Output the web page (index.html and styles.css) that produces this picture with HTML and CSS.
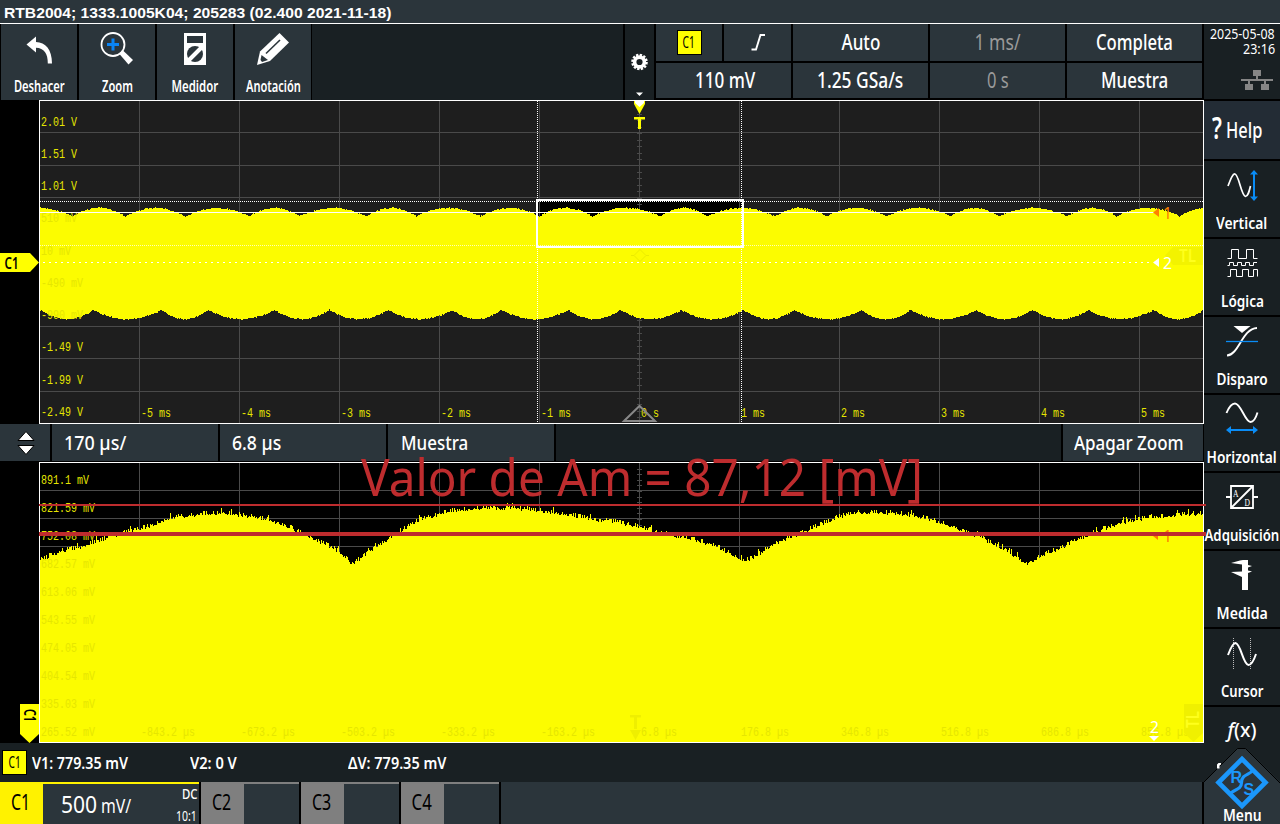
FILE: index.html
```html
<!DOCTYPE html>
<html lang="es">
<head>
<meta charset="utf-8">
<title>RTB2004</title>
<link rel="stylesheet" href="styles.css">
</head>
<body>
<div class="screen">
  <header class="titlebar"><span class="fit left" data-w="387">RTB2004; 1333.1005K04; 205283 (02.400 2021-11-18)</span></header>

  <div class="main">
    <div class="work">
      <div class="toolbar">
        <div class="tools">
          <div class="tool">
            <svg width="40" height="36" viewBox="-1 0 40 36"><path d="M6.500 15.500 16 7.500V13C25.500 13.300 32 20.500 32 34.500H27.800C28 24.500 24 19 16 18.800V23.500Z" fill="#fff"/></svg>
            <span class="fit" data-w="51">Deshacer</span>
          </div>
          <div class="tool">
            <svg width="40" height="36" viewBox="-1 0 40 36"><circle cx="15" cy="15.500" r="11.500" fill="none" stroke="#fff" stroke-width="1.800"/><path d="M15 9.500v12M9 15.500h12" stroke="#0a84f5" stroke-width="3"/><path d="M21 24.500l4-3L35 31l-4.500 4.500Z" fill="#fff"/></svg>
            <span class="fit" data-w="31">Zoom</span>
          </div>
          <div class="tool">
            <svg width="40" height="36" viewBox="0 0 40 36"><path d="M9 4h22v32H9z" fill="#fff"/><path d="M12 7h16v7H12z" fill="#2b353b"/><circle cx="20" cy="25" r="8" fill="#2b353b"/><path d="M13 32 27 18" stroke="#fff" stroke-width="4"/></svg>
            <span class="fit" data-w="47">Medidor</span>
          </div>
          <div class="tool">
            <svg width="40" height="36" viewBox="0 0 40 36"><path d="M4 36 7 22.500 26.500 4 36 13.500 17 32Z" fill="#fff"/><path d="M13 24.500 27 11" stroke="#2b353b" stroke-width="1.600"/><path d="M8.500 26 15 31 9 33 7.500 31Z" fill="#2b353b"/></svg>
            <span class="fit" data-w="55">Anotación</span>
          </div>
        </div>
        <div class="spacer"></div>
        <div class="gear">
          <svg width="29" height="76" viewBox="0 0 29 76"><circle cx="14.500" cy="38" r="7" fill="none" stroke="#fff" stroke-width="2.600" stroke-dasharray="2.300 1.365"/><circle cx="14.500" cy="38" r="4.900" fill="none" stroke="#fff" stroke-width="3.600"/><path d="M11 68.500h7L14.500 72Z" fill="#fff"/></svg>
        </div>
        <div class="info">
          <div class="cell"><b class="chip big"><span class="fit" data-w="12">C1</span></b></div>
          <div class="cell"><svg width="16" height="18" viewBox="0 0 16 18"><path d="M1.500 16.500H6L10.500 2H15" fill="none" stroke="#fff" stroke-width="1.900"/></svg></div>
          <div class="cell"><span class="fit" data-w="39">Auto</span></div>
          <div class="cell dim"><span class="fit" data-w="46">1 ms/</span></div>
          <div class="cell"><span class="fit" data-w="77">Completa</span></div>
          <div class="cell wide"><span class="fit" data-w="60">110 mV</span></div>
          <div class="cell"><span class="fit" data-w="86">1.25 GSa/s</span></div>
          <div class="cell dim"><span class="fit" data-w="22">0 s</span></div>
          <div class="cell"><span class="fit" data-w="67">Muestra</span></div>
        </div>
      </div>

      <svg class="chart" id="overview" width="1204" height="324" viewBox="0 100 1204 324"></svg>

      <div class="zoombar">
        <div class="zcell arrows"><svg width="18" height="26" viewBox="0 0 18 26"><path d="M1 10.500 9 1.500 17 10.500Z" fill="#fff" stroke="#000"/><path d="M1 15.500 9 24.500 17 15.500Z" fill="#fff" stroke="#000"/></svg></div>
        <div class="zcell z1"><span class="fit left" data-w="62">170 µs/</span></div>
        <div class="zcell z2"><span class="fit left" data-w="49">6.8 µs</span></div>
        <div class="zcell z2 z3"><span class="fit left" data-w="67">Muestra</span></div>
        <div class="zgap"></div>
        <div class="zcell zoff"><span class="fit left" data-w="110">Apagar Zoom</span></div>
      </div>

      <svg class="chart" id="detail" width="1204" height="281" viewBox="0 462 1204 281"></svg>

      <div class="measure">
        <b class="chip"><span class="fit" data-w="12">C1</span></b>
        <div class="m0"><span class="fit left" data-w="96">V1: 779.35 mV</span></div>
        <div class="m0"><span class="fit left" data-w="47">V2: 0 V</span></div>
        <div class="m0"><span class="fit left" data-w="98">ΔV: 779.35 mV</span></div>
      </div>

      <div class="channels">
        <div class="chan on">
          <div class="tag"><span class="fit" data-w="19">C1</span></div>
          <div class="body">
            <div class="scale"><span class="num"><span class="fit left" data-w="36">500</span></span><span class="unit"><span class="fit left" data-w="30">mV/</span></span></div>
            <div class="probe"><span class="fit right" data-w="16">DC</span><span class="fit right thin" data-w="21">10:1</span></div>
          </div>
        </div>
        <div class="chan"><div class="tag"><span class="fit" data-w="19">C2</span></div><div class="body"></div></div>
        <div class="chan"><div class="tag"><span class="fit" data-w="19">C3</span></div><div class="body"></div></div>
        <div class="chan"><div class="tag"><span class="fit" data-w="20">C4</span></div><div class="body"></div></div>
        <div class="fill"></div>
      </div>
    </div>

    <aside class="side">
      <div class="clock">
        <span class="fit right" data-w="65">2025-05-08</span>
        <span class="fit right" data-w="32">23:16</span>
        <svg width="34" height="22" viewBox="0 0 34 22"><path d="M13 0h8v6h-3v3h15v2h-7v3h3v6h-8v-6h3v-3H10v3h3v6H5v-6h3v-3H1V9h15V6h-3z" fill="#858585"/></svg>
      </div>
      <div class="help"><span class="q"><span class="fit left" data-w="10">?</span></span><span class="fit left" data-w="36">Help</span></div>
      <div class="item"><svg width="76" height="44" viewBox="0 0 76 44"><path d="M24 25C27 17 29 12.500 31 13C35 14 37 34 41.500 35.500C44 35.500 45 31 46.500 25" fill="none" stroke="#fff" stroke-width="1.700"/><path d="M50 12v26" stroke="#0a8cf5" stroke-width="2"/><path d="M46 13.500 50 9l4 4.500ZM46 35.500l4 4.500 4-4.500Z" fill="#0a8cf5"/></svg><span class="fit" data-w="51">Vertical</span></div>
      <div class="item"><svg width="76" height="44" viewBox="0 0 76 44"><path d="M23.500 19.500h4v-9h7v9h8v-9h7v9h4M23.500 26.500h2v-3h4v3h4v-3h4v3h4v-3h4v3h4v-3h3.500M23.500 37.500h3v-7h6v7h6v-7h6v7h5v-7h4v7" fill="none" stroke="#fff"/></svg><span class="fit" data-w="43">Lógica</span></div>
      <div class="item"><svg width="76" height="44" viewBox="0 0 76 44"><path d="M29.500 9h17L38 16Z" fill="#fff"/><path d="M23 38.500C35 38 38 11.500 53 11" fill="none" stroke="#fff" stroke-width="1.900"/><path d="M22 24.500h32" stroke="#0a8cf5" stroke-width="1.300"/></svg><span class="fit" data-w="51">Disparo</span></div>
      <div class="item"><svg width="76" height="44" viewBox="0 0 76 44"><path d="M22.500 18C25 12 28 8.500 31 8.500C37 8.500 41 27 46.500 27C49.500 27 52 22.500 53.500 17.500" fill="none" stroke="#fff" stroke-width="1.900"/><path d="M26 35h24" stroke="#0a8cf5" stroke-width="2"/><path d="M27 31 22 35l5 4ZM49 31l5 4-5 4Z" fill="#0a8cf5"/></svg><span class="fit" data-w="70">Horizontal</span></div>
      <div class="item"><svg width="76" height="44" viewBox="0 0 76 44"><path d="M27 13h22v22H27zM22 24h5M49 24h5M28 34 48 14" fill="none" stroke="#fff" stroke-width="1.800"/><text class="serif" x="29" y="24" textLength="5.500" lengthAdjust="spacingAndGlyphs">A</text><text class="serif" x="40.500" y="33" textLength="5.500" lengthAdjust="spacingAndGlyphs">D</text></svg><span class="fit" data-w="75">Adquisición</span></div>
      <div class="item"><svg width="76" height="44" viewBox="1 0 76 44"><path d="M28 12 37 9.500 40 9h5v5l4 1-4 1.500v3l4 1-4 1.500V39h-6V26L28 21l11-.5V13.500Z" fill="#fff"/></svg><span class="fit" data-w="51">Medida</span></div>
      <div class="item"><svg width="76" height="44" viewBox="0 -1 76 44"><path d="M29.500 8v32M46.500 8v32" stroke="#bbb" stroke-dasharray="1 1"/><path d="M24 25C27 17 29 13 31.500 13C37 14 39 34.500 44.500 35C48 35 50 30 52 24" fill="none" stroke="#fff" stroke-width="2"/></svg><span class="fit" data-w="42">Cursor</span></div>
      <div class="item last"><span class="fx"><span class="fit" data-w="29"><i>f</i>(x)</span></span></div>
      <div class="menu">
        <svg width="76" height="76" viewBox="1204 748 76 76"><path d="M1204 824V782L1237 748.500h9L1280 782v42Z" fill="#2b353b"/><path d="M1204 782 1237.500 748.500h8L1280 783" fill="none" stroke="#000"/><path d="M1217 768.500v-4l1.500-1.500h2.500v1.500l-1.500 1v3Z" fill="#fff"/><path d="M1242 759 1265.500 782.500 1242 806 1218.500 782.500Z" fill="none" stroke="#1b97fb" stroke-width="4.600"/><path d="M1230 794.500C1232 789 1241.500 791 1241.500 782.500C1241.500 774 1250 775 1252.500 770.500" fill="none" stroke="#1b97fb" stroke-width="3.200"/><text class="rs" x="1230.500" y="782.500">R</text><text class="rs" x="1243.500" y="794.500">S</text></svg>
        <span class="fit" data-w="39">Menu</span>
      </div>
    </aside>
  </div>

  <svg class="note" width="1280" height="824" viewBox="0 0 1280 824">
    <path d="M39 504h1167v2H39zM39 532h1167v4H39z" fill="#be2c2e"/>
    <text x="361" y="496" textLength="562" lengthAdjust="spacingAndGlyphs">Valor de Am = 87,12 [mV]</text>
  </svg>
</div>
<script src="scope.js"></script>
</body>
</html>
```
FILE: styles.css
```css
* { box-sizing: border-box; }
body { margin: 0; background: #000; color: #fff; font-family: "Noto Sans", "Open Sans", sans-serif; }
svg { display: block; flex: none; }
.screen { position: relative; width: 1280px; height: 824px; overflow: hidden; display: flex; flex-direction: column; }
.fit { display: inline-block; white-space: nowrap; flex: none; }
.fit.left { transform-origin: left center; }
.fit.right { transform-origin: right center; }

.titlebar { height: 24px; border-bottom: 1px solid #fff; background: #2b353b; padding: 2px 0 0 4px; font: bold 14px/22px "Liberation Sans", sans-serif; }
.main { flex: 1; display: flex; min-height: 0; }
.work { width: 1204px; display: flex; flex-direction: column; }

.toolbar { height: 76px; display: flex; }
.tools { display: flex; gap: 2px; padding-left: 1px; width: 312px; }
.tool { width: 76px; height: 76px; background: #2b353b; display: flex; flex-direction: column; align-items: center; padding-top: 5px; font-weight: 600; font-size: 15.5px; line-height: 20px; gap: 11px; }
.tool svg { height: 36px; }
.spacer { flex: 1; background: #192023; margin-right: 2px; }
.gear { width: 29px; background: #192023; margin-right: 2px; }
.info { width: 546px; margin-right: 2px; display: grid; grid-template-columns: 66px 67px 135px 135px 135px; grid-template-rows: 37px 35px; gap: 2px; padding-bottom: 2px; }
.cell { background: #2b353b; display: flex; align-items: center; justify-content: center; font-size: 21px; line-height: 24px; min-width: 0; font-weight: 500; padding-bottom: 1px; }
.cell.wide { grid-column: span 2; padding-left: 4px; }
.cell.dim { color: #9a9a9a; font-weight: 400; }
.chip { width: 25px; height: 25px; background: #ff0; border: 1px solid #000; color: #000; display: flex; align-items: center; justify-content: center; font-size: 16px; line-height: 20px; font-weight: 400; flex: none; padding-bottom: 1px; }

.chart text { font-family: "Liberation Mono", monospace; font-size: 12px; fill: #e6e600; }
.chart .cond { font-family: "Noto Sans", sans-serif; font-size: 17px; }
.chart .blk { fill: #000; font-weight: 600; font-size: 16px; }
.chart .tl { font-size: 18px; fill: #ffff1c; font-weight: 600; }

.zoombar { height: 38px; display: flex; gap: 2px; padding-bottom: 1px; font-size: 20.5px; font-weight: 500; }
.zcell { background: #2b353b; display: flex; align-items: center; min-width: 0; padding-bottom: 2px; }
.arrows { width: 50px; justify-content: center; padding: 0 0 0 1px; }
.z1 { width: 166px; padding-left: 12px; }
.z2 { width: 166px; padding-left: 12px; }
.z3 { padding-left: 13px; }
.zgap { flex: 1; background: #192023; }
.zoff { width: 140px; padding-left: 11px; margin-right: 1px; }

.measure { height: 39px; background: #192023; display: flex; align-items: center; padding-left: 2px; font-size: 16.5px; font-weight: 600; }
.m0 { width: 158px; padding-left: 5px; }
.measure .fit { vertical-align: top; }

.channels { height: 42px; display: flex; gap: 2px; }
.chan { width: 98px; display: flex; }
.chan .tag { width: 43px; background: #7f7f7f; color: #000; display: flex; align-items: center; justify-content: center; font-size: 21px; padding: 0 1px 2px 0; }
.chan .body { flex: 1; background: #2b353b; border-top: 2px solid #7f7f7f; display: flex; min-width: 0; }
.chan.on { width: 199px; }
.chan.on .tag { background: #fff200; }
.chan.on .body { border-color: #fff200; justify-content: space-between; padding: 0 2px 0 18px; }
.scale { display: flex; align-items: baseline; height: 40px; padding-top: 3px; }
.num { width: 40px; font-size: 24px; }
.unit { width: 34px; font-size: 19px; }
.probe { width: 30px; display: flex; flex-direction: column; align-items: flex-end; font-size: 15px; line-height: 20px; gap: 2px; font-weight: 500; margin-top: -1px; }
.thin { font-weight: 400; }
.fill { flex: 1; background: #2b353b; margin-right: 2px; }

.side { width: 76px; display: flex; flex-direction: column; gap: 2px; position: relative; }
.clock { height: 75px; background: #192023; display: flex; flex-direction: column; align-items: flex-end; padding: 2px 5px 0 0; font-size: 14.5px; line-height: 15px; }
.clock svg { margin: 14px 1px 0 0; }
.help { height: 58px; background: #232c35; display: flex; align-items: center; padding-left: 8px; font-size: 21px; font-weight: 500; }
.q { width: 14px; height: 30px; font-size: 30px; font-weight: 600; display: flex; align-items: center; line-height: 26px; margin-top: -5px; }
.item { height: 76px; background: #192023; display: flex; flex-direction: column; align-items: center; font-size: 15.5px; line-height: 21px; font-weight: 600; gap: 8px; overflow: hidden; }
.item.last { flex: 1; padding-top: 12px; }
.fx { font-size: 20px; font-weight: 500; }
.serif { font: 10px "Liberation Serif", serif; fill: #fff; }
.menu { position: absolute; left: 0; bottom: 0; width: 76px; height: 76px; font-size: 16px; font-weight: 600; line-height: 18px; display: flex; flex-direction: column; align-items: center; }
.menu .fit { margin-top: -18px; }
.rs { font: bold 16px "Liberation Sans", sans-serif; fill: #1b97fb; }

.note { position: absolute; left: 0; top: 0; }
.note text { font-family: "Noto Sans", sans-serif; font-size: 51px; fill: #be2c2e; }
```
FILE: scope.js
```js
// Squeeze each label to its condensed width.
document.querySelectorAll(".fit").forEach(function (el) {
  el.style.transform = "scaleX(" + (el.dataset.w / el.offsetWidth).toFixed(4) + ")";
  // keep over-wide labels centred in their column
  if (!el.classList.contains("left") && !el.classList.contains("right")) {
    var d = (el.offsetWidth - el.dataset.w) / 2;
    el.style.marginLeft = -d + "px";
    el.style.marginRight = -d + "px";
  }
});

var seed = 7;
function rnd() { seed = (seed * 16807) % 2147483647; return seed / 2147483647; }

function label(x, y, s) {
  return '<text x="' + x + '" y="' + y + '" textLength="' + (s.length * 6) + '" lengthAdjust="spacingAndGlyphs">' + s + "</text>";
}
function grid(top, bottom, rows, step) {
  var d = "";
  for (var x = 139; x < 1200; x += 100) d += "M" + x + ".5 " + top + "V" + bottom;
  rows.forEach(function (y) { d += "M40 " + y + ".5H1203"; });
  for (var y = top + step; y < bottom; y += step) d += "M637 " + (Math.round(y) + 0.5) + "h5";
  return '<path d="' + d + '" stroke="#4a4a4a" fill="none" shape-rendering="crispEdges"/>';
}
// Envelope between cusps, with crests of the given height.
function arches(cusps, x, base, amp) {
  for (var i = 0; i < cusps.length - 1; i++) {
    if (x >= cusps[i] && x < cusps[i + 1]) {
      var t = (x - cusps[i]) / (cusps[i + 1] - cusps[i]);
      return base + amp * Math.pow(Math.sin(Math.PI * t), 0.9);
    }
  }
  return base;
}
function interp(pts, x) {
  for (var i = 0; i < pts.length - 1; i++) {
    if (x <= pts[i + 1][0]) {
      var a = pts[i], b = pts[i + 1];
      return a[1] + (b[1] - a[1]) * (x - a[0]) / (b[0] - a[0]);
    }
  }
  return pts[pts.length - 1][1];
}

(function overview() {
  var top = [8, 72, 125, 185, 249, 299, 366, 416, 480, 539, 592, 660, 707, 774, 826, 886, 950, 998, 1067, 1116, 1179, 1230];
  var bot = [41, 93, 161, 208, 274, 329, 388, 452, 501, 568, 620, 681, 743, 794, 861, 910, 976, 1032, 1088, 1153, 1203, 1260];
  var d = "";
  for (var x = 40; x < 1203; x++) {
    var y0 = Math.round(arches(top, x, 216.5, -8.6) + rnd() * 1.2 - 0.6);
    var y1 = Math.round(arches(bot, x, 310, 9.2) + rnd() * 1.2 - 0.6);
    d += "M" + x + " " + y0 + "h1V" + y1 + "h-1z";
  }
  var s = '<path d="M40 101H1203V423H40Z" fill="#1e1e1e"/>';
  s += '<path d="M538 201H742V246H538Z" fill="#000"/>';
  s += grid(101, 423, [132, 165, 197, 326, 358, 391], 6.45);
  s += '<path d="' + d + '" fill="#fcfc00" shape-rendering="crispEdges"/>';
  ["2.01 V", "1.51 V", "1.01 V", "510 mV", "10 mV", "-490 mV", "-990 mV", "-1.49 V", "-1.99 V", "-2.49 V"].forEach(function (t, i) {
    s += label(41, Math.round(125.7 + i * 32.25), t);
  });
  for (var k = -5; k <= 5; k++) s += label(640 + k * 100 + 1, 417, k + (k ? " ms" : " s"));
  // cursors and zoom window
  s += '<g shape-rendering="crispEdges" fill="none" stroke="#fff">' +
    '<path d="M40 201.500H1203M537.500 101V423M741.500 101V423" stroke-dasharray="1 1"/>' +
    '<path d="M40 245.500H1203" stroke="#ffffb4" stroke-dasharray="1 1"/>' +
    '<path d="M43 262.500H1153" stroke-dasharray="2 4"/>' +
    '<path d="M40 212.500H1154"/>' +
    '<path d="M537 200H743V246.500H537Z" stroke-width="2"/></g>';
  s += '<path d="M1153 212.500l6-4.500v9z" fill="#ff8000"/><text class="cond" x="1163" y="218.500" textLength="9" lengthAdjust="spacingAndGlyphs" style="fill:#ff8000">1</text>';
  s += '<path d="M1165 255.500 1173 247h30v18h-30Z" fill="#f3f300"/><text class="cond tl" x="1179" y="262" textLength="17" lengthAdjust="spacingAndGlyphs">TL</text>';
  s += '<path d="M1153 262.500l6-4.500v9z" fill="#fff"/><text class="cond" x="1163" y="269" textLength="9" lengthAdjust="spacingAndGlyphs" style="fill:#fff">2</text>';
  s += '<path d="M634 255.500 640 249.500 646 255.500 640 261.500ZM631 255.500h3M646 255.500h3" fill="none" stroke="#ebeb00"/>';
  s += '<path d="M634 101h11v3l-5.500 10L634 104Z" fill="#ff0"/><path d="M635 101h9v2l-4.500 4-4.500-4Z" fill="#fff"/><path d="M634 117h11v2.500h-4V129h-3v-9.500h-4z" fill="#ff0"/>';
  s += '<path d="M624 421 639.500 406 655 421Z" fill="none" stroke="#888" stroke-width="2"/>';
  s += '<path d="M0 253H30L39 262.500 30 272H0Z" fill="#ff0"/><text class="cond blk" x="4.500" y="268.500" textLength="14" lengthAdjust="spacingAndGlyphs">C1</text>';
  s += '<path d="M39.500 100.500H1203.500V423.500H39.500Z" fill="none" stroke="#fff" shape-rendering="crispEdges"/>';
  document.getElementById("overview").innerHTML = s;
})();

(function detail() {
  var env = [[40, 561], [60, 552], [80, 548], [100, 541], [120, 535], [150, 527], [170, 519], [200, 515], [220, 514], [240, 516], [260, 519], [280, 524], [300, 533], [320, 543], [335, 550], [345, 558], [352, 565], [366, 555], [380, 546], [391, 537], [405, 529], [419, 521], [435, 516], [451, 512], [474, 509], [514, 509], [530, 511], [561, 514], [585, 519], [617, 523], [640, 528], [676, 537], [696, 541], [716, 547], [735, 557], [743, 562], [753, 559], [767, 549], [783, 541], [799, 535], [814, 528], [838, 518], [854, 514], [878, 513], [905, 515], [925, 519], [941, 524], [960, 532], [980, 538], [1000, 549], [1015, 557], [1027, 565], [1040, 557], [1060, 549], [1080, 539], [1100, 531], [1120, 524], [1150, 518], [1180, 516], [1203, 514]];
  var d = "";
  for (var x = 40; x < 1203; x++) {
    var r = rnd();
    var n = r > 0.97 ? -6 : r > 0.75 ? -3.5 : r * 4 - 2;
    d += "M" + x + " " + Math.round(interp(env, x) + n) + "h1V742h-1z";
  }
  var s = '<path d="M40 463H1203V742H40Z" fill="#000"/>' + grid(463, 742, [490, 518, 546], 5.6);
  s += '<path d="' + d + '" fill="#fcfc00" shape-rendering="crispEdges"/>';
  ["891.1", "821.59", "752.08", "682.57", "613.06", "543.55", "474.05", "404.54", "335.03", "265.52"].forEach(function (t, i) {
    s += label(41, 484 + i * 28, t + " mV");
  });
  ["-843.2", "-673.2", "-503.2", "-333.2", "-163.2", "6.8", "176.8", "346.8", "516.8", "686.8", "856.8"].forEach(function (t, i) {
    s += label(141 + i * 100, 736, t + " µs");
  });
  s += '<path d="M630 715h11v2.500h-4V729h-3v-11.500h-4zM630 730h11l-5.500 10z" fill="#efef00"/>';
  s += '<path d="M1184 704h19v29l-9.500 9L1184 733Z" fill="#f0f000"/><text class="cond tl" transform="translate(1199 728) rotate(-90)" textLength="17" lengthAdjust="spacingAndGlyphs">TL</text>';
  s += '<text class="cond" x="1150" y="733" textLength="9" lengthAdjust="spacingAndGlyphs" style="fill:#fff">2</text><path d="M1149 736h10l-5 5z" fill="#fff"/>';
  s += '<path d="M1153 536l5-4v8z" fill="#ff8000"/><text class="cond" x="1163" y="541.500" textLength="9" lengthAdjust="spacingAndGlyphs" style="fill:#ff8000">1</text>';
  s += '<path d="M20 704H39V734L29.500 743 20 734Z" fill="#ff0"/><text class="cond blk" transform="translate(23.500 709) rotate(90)" textLength="13" lengthAdjust="spacingAndGlyphs">C1</text>';
  s += '<path d="M39.500 462.500H1203.500V742.500H39.500Z" fill="none" stroke="#fff" shape-rendering="crispEdges"/>';
  document.getElementById("detail").innerHTML = s;
})();
```
